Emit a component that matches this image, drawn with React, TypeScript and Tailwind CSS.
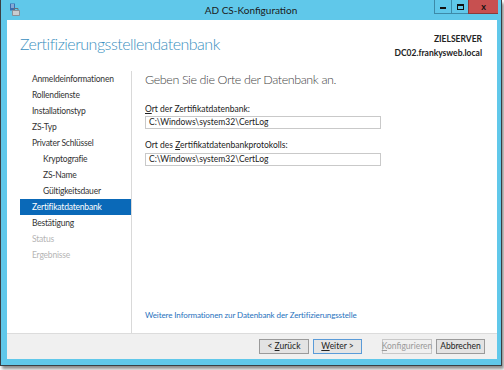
import React from "react";

const navItems: { label: string; sub?: boolean; state?: "active" | "disabled" }[] = [
  { label: "Anmeldeinformationen" },
  { label: "Rollendienste" },
  { label: "Installationstyp" },
  { label: "ZS-Typ" },
  { label: "Privater Schlüssel" },
  { label: "Kryptografie", sub: true },
  { label: "ZS-Name", sub: true },
  { label: "Gültigkeitsdauer", sub: true },
  { label: "Zertifikatdatenbank", state: "active" },
  { label: "Bestätigung" },
  { label: "Status", state: "disabled" },
  { label: "Ergebnisse", state: "disabled" },
];

function ServerIcon() {
  return (
    <svg width="12" height="14" viewBox="0 0 12 14">
      <rect x="1" y="0.5" width="5" height="7" fill="#3a6fb0" />
      <rect x="2" y="1.5" width="3" height="1" fill="#cfe3f7" />
      <rect x="2" y="3.5" width="3" height="1" fill="#cfe3f7" />
      <rect x="3" y="7" width="8" height="6" rx="1" fill="#8a8f96" />
      <rect x="4" y="8" width="6" height="4" fill="#c9ccd0" />
      <path d="M5 7 V5.5 H9 V7" stroke="#6b7078" fill="none" />
    </svg>
  );
}

function WinButton({ label, primary, disabled }: { label: React.ReactNode; primary?: boolean; disabled?: boolean }) {
  return (
    <button
      className={
        "w-full h-[15px] flex items-center justify-center text-[8.5px] leading-none border " +
        (primary
          ? "border-[#5a9bd8] bg-[#e5e5e5] text-[#222]"
          : disabled
          ? "border-[#c8c8c8] bg-[#f0f0f0] text-[#9a9a9a]"
          : "border-[#9a9a9a] bg-[#e3e3e3] text-[#222]")
      }
    >
      <span>{label}</span>
    </button>
  );
}

export default function App() {
  return (
    <div className="w-[504px] h-[370px] bg-white" style={{ fontFamily: 'Lato, "Noto Sans", sans-serif' }}>
      <div className="w-[502px] h-[366px] bg-[#60c8ea] border-l border-r border-b border-[#3a3f44] shadow-[2px_3px_3px_rgba(0,0,0,0.45)] flex flex-col">
        {/* Titelleiste */}
        <div className="h-[20px] flex items-start relative">
          <div className="pl-[8px] pt-[3px]">
            <ServerIcon />
          </div>
          <div className="absolute left-0 right-0 top-[3px] text-center text-[10px] text-[#1b1b1b]">AD CS-Konfiguration</div>
          <div className="ml-auto flex h-[14px] mr-[3px]">
            <div className="w-[17px] border-l border-b border-[#3d8aa8] flex items-end justify-center pb-[4px]">
              <div className="w-[6px] h-[2px] bg-[#111]" />
            </div>
            <div className="w-[17px] border-l border-b border-[#3d8aa8] flex items-center justify-center">
              <div className="w-[7px] h-[6px] border border-[#111] border-t-2" />
            </div>
            <div className="w-[30px] bg-[#c75050] border-l border-b border-[#8a3a3a] flex items-center justify-center text-[9px] font-bold text-[#111]">
              x
            </div>
          </div>
        </div>

        {/* Inhalt */}
        <div className="flex-1 ml-[6px] mr-[4px] mb-[6px] bg-white flex flex-col">
          <div className="flex justify-between pl-[13px] pr-[15px] pt-[12px] h-[51px]">
            <div className="text-[16px] font-light tracking-[-0.5px] text-[#3a8fc0] leading-none pt-[4px]">Zertifizierungsstellendatenbank</div>
            <div className="text-right text-[8.5px] leading-[14px] text-[#222] font-bold">
              <div>ZIELSERVER</div>
              <div>DC02.frankysweb.local</div>
            </div>
          </div>

          <div className="flex flex-1">
            <div className="w-[125px] pl-[13px] border-r border-[#d9d9d9] pb-[12px]">
              <div className="flex flex-col">
                {navItems.map((it) => (
                  <div
                    key={it.label}
                    className={
                      "h-[16px] flex items-center text-[8.5px] tracking-[-0.2px] " +
                      (it.sub ? "pl-[23px] " : "pl-[12px] ") +
                      (it.state === "active"
                        ? "bg-[#0a69b8] text-white"
                        : it.state === "disabled"
                        ? "text-[#b5b5b5]"
                        : "text-[#333]")
                    }
                  >
                    {it.label}
                  </div>
                ))}
              </div>
            </div>

            <div className="flex-1 pl-[13px] flex flex-col pb-[12px]">
              <div className="text-[12.5px] font-light tracking-[-0.4px] text-[#444] leading-none pt-[3px]">Geben Sie die Orte der Datenbank an.</div>
              <div className="mt-[16px] text-[8.5px] text-[#222]">
                <span className="underline">O</span>rt der Zertifikatdatenbank:
              </div>
              <div className="mt-[1px] w-[236px] h-[13px] border border-[#c9c9c9] flex items-center pl-[3px] text-[8.5px] text-[#222]">
                C:\Windows\system32\CertLog
              </div>
              <div className="mt-[10px] text-[8.5px] text-[#222]">
                Ort des <span className="underline">Z</span>ertifikatdatenbankprotokolls:
              </div>
              <div className="mt-[1px] w-[236px] h-[13px] border border-[#c9c9c9] flex items-center pl-[3px] text-[8.5px] text-[#222]">
                C:\Windows\system32\CertLog
              </div>
              <div className="mt-auto text-[8px] tracking-[-0.1px] text-[#1f72bd]">Weitere Informationen zur Datenbank der Zertifizierungsstelle</div>
            </div>
          </div>

          <div className="h-[26px] bg-[#f0f0f0] border-t border-[#dcdcdc] flex items-center justify-end pr-[12px]">
            <div className="flex gap-[4px]">
              <div className="w-[50px]">
                <WinButton label={<>&lt; <span className="underline">Z</span>urück</>} />
              </div>
              <div className="w-[49px]">
                <WinButton primary label={<><span className="underline">W</span>eiter &gt;</>} />
              </div>
              <div className="w-[50px] ml-[16px]">
                <WinButton disabled label={<><span className="underline">K</span>onfigurieren</>} />
              </div>
              <div className="w-[49px]">
                <WinButton label="Abbrechen" />
              </div>
            </div>
          </div>
        </div>
      </div>
    </div>
  );
}
